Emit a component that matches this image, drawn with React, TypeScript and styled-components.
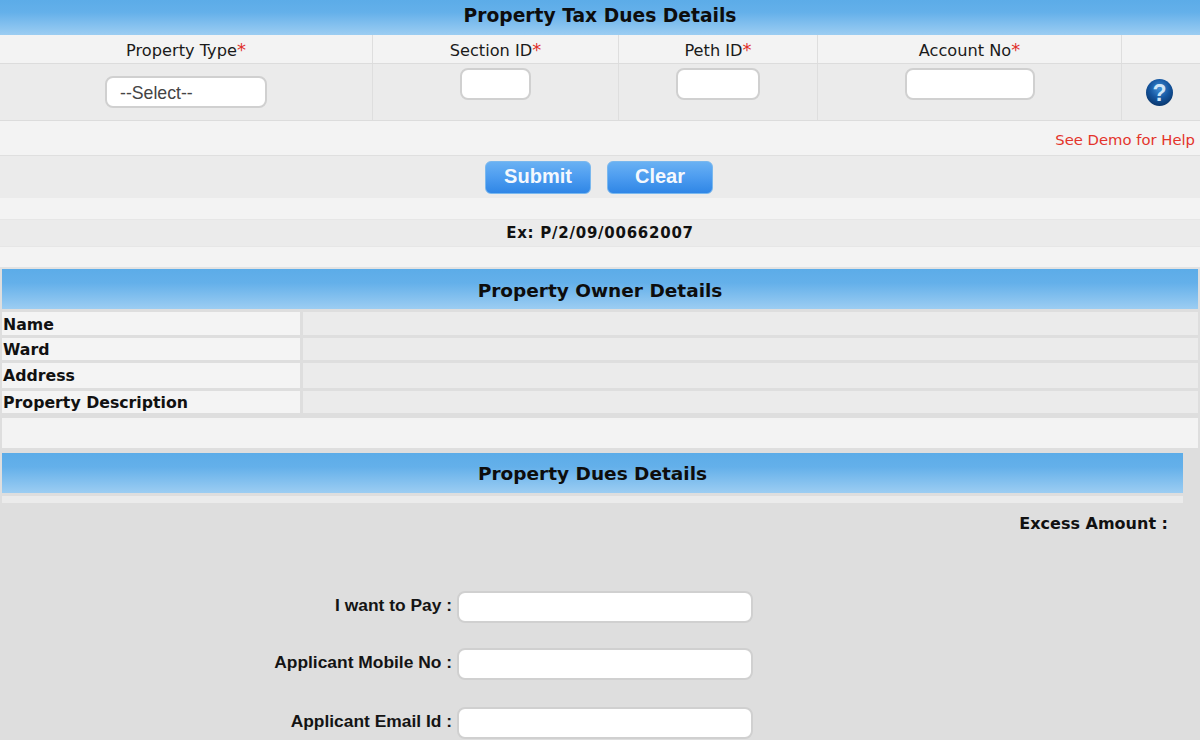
import React from "react";
import styled, { createGlobalStyle } from "styled-components";

const Global = createGlobalStyle`
  html, body { margin: 0; padding: 0; background: #dedede; }
  body { font-family: "DejaVu Sans", Verdana, sans-serif; color: #111; overflow: hidden; }
  #root { width: 1200px; height: 740px; overflow: hidden; }
`;

const Page = styled.div`
  width: 1200px;
  height: 740px;
  overflow: hidden;
  display: flex;
  flex-direction: column;
`;

const Banner = styled.h2<{ $h: number; $size?: number; $pb?: number; $pt?: number }>`
  margin: 0;
  box-sizing: border-box;
  height: ${(p) => p.$h}px;
  padding: ${(p) => p.$pt ?? 0}px 0 ${(p) => p.$pb ?? 0}px;
  flex: none;
  display: flex;
  align-items: center;
  justify-content: center;
  font-size: ${(p) => p.$size ?? 18.5}px;
  font-weight: 700;
  color: #0d0d0d;
  background: linear-gradient(#5cace8 0%, #64b0ea 35%, #9ccdf2 100%);
`;

const Cols = "373px 246px 199px 304px 78px";

const HeadRow = styled.div`
  display: grid;
  grid-template-columns: ${Cols};
  box-sizing: border-box;
  height: 29px;
  flex: none;
  background: #f3f3f3;
  border-bottom: 1px solid #dcdcdc;
`;

const HeadCell = styled.div`
  display: flex;
  align-items: center;
  justify-content: center;
  font-size: 16.2px;
  color: #1a1a1a;
  border-right: 1px solid #dedede;
  padding-top: 3px;
  &:last-child { border-right: 0; }
`;

const Star = styled.span`
  color: #e0302a;
  font-size: 18px;
  line-height: 1;
`;

const InputRow = styled.div`
  display: grid;
  grid-template-columns: ${Cols};
  box-sizing: border-box;
  height: 57px;
  flex: none;
  background: #ebebeb;
  border-bottom: 1px solid #dcdcdc;
`;

const InputCell = styled.div<{ $center?: boolean }>`
  display: flex;
  justify-content: center;
  align-items: ${(p) => (p.$center ? "center" : "flex-start")};
  padding-top: ${(p) => (p.$center ? 0 : 4)}px;
  border-right: 1px solid #dedede;
  &:last-child { border-right: 0; }
`;

const Field = styled.div<{ $w: number; $h?: number }>`
  box-sizing: border-box;
  width: ${(p) => p.$w}px;
  height: ${(p) => p.$h ?? 32}px;
  background: #fff;
  border: 2px solid #d0d0d0;
  border-radius: 8px;
  flex: none;
`;

const SelectBox = styled(Field)`
  display: flex;
  align-items: center;
  padding: 2px 0 0 13px;
  font-family: "Liberation Sans", Arial, sans-serif;
  font-size: 17.7px;
  color: #444;
`;

const HelpWrap = styled.div`
  display: flex;
  margin-right: 3px;
`;

const DemoRow = styled.div`
  height: 35px;
  flex: none;
  background: #f3f3f3;
  border-bottom: 1px solid #dfdfdf;
  display: flex;
  align-items: center;
  justify-content: flex-end;
  padding: 3px 5px 0 0;
  box-sizing: border-box;
  font-size: 14.8px;
  color: #e3342b;
`;

const ButtonRow = styled.div`
  height: 42px;
  flex: none;
  background: #ebebeb;
  display: flex;
  justify-content: center;
  align-items: flex-start;
  gap: 16px;
  padding: 5px 2px 0 0;
  box-sizing: border-box;
`;

const Btn = styled.button`
  width: 106px;
  height: 33px;
  padding: 0 0 2px;
  border: 1px solid #7ab8ee;
  border-radius: 6px;
  background: linear-gradient(#69b1f3 0%, #4f9ef0 45%, #2f86e6 100%);
  color: #f4f8fd;
  font-family: "Liberation Sans", Arial, sans-serif;
  font-size: 20px;
  font-weight: 700;
`;

const Blank = styled.div<{ $h: number; $bg?: string }>`
  height: ${(p) => p.$h}px;
  flex: none;
  background: ${(p) => p.$bg ?? "#f3f3f3"};
`;

const ExRow = styled.div`
  height: 28px;
  flex: none;
  background: #ebebeb;
  display: flex;
  align-items: center;
  justify-content: center;
  font-size: 15px;
  letter-spacing: 0.75px;
  font-weight: 700;
  color: #111;
  border-top: 1px solid #e6e6e6;
  border-bottom: 1px solid #e6e6e6;
  box-sizing: border-box;
`;

const Inset = styled.div<{ $right?: number }>`
  margin: 0 ${(p) => p.$right ?? 2}px 0 2px;
  display: flex;
  flex-direction: column;
  flex: none;
`;

const OwnerTable = styled.div`
  margin: 3px 2px 0;
  display: flex;
  flex-direction: column;
  flex: none;
`;

const OwnerRow = styled.div<{ $h: number; $gap: number }>`
  display: grid;
  grid-template-columns: 298px 1fr;
  column-gap: 3px;
  height: ${(p) => p.$h}px;
  margin-bottom: ${(p) => p.$gap}px;
`;

const OwnerLabel = styled.div<{ $pt: number }>`
  background: #f4f4f4;
  font-size: 15.75px;
  font-weight: 700;
  color: #111;
  display: flex;
  align-items: center;
  padding: ${(p) => p.$pt}px 0 0 1px;
`;

const OwnerValue = styled.div`
  background: #ebebeb;
`;

const ExcessRow = styled.div`
  display: flex;
  justify-content: flex-end;
  padding: 12px 32px 0 0;
  height: 66px;
  box-sizing: border-box;
  font-size: 16px;
  font-weight: 700;
  color: #111;
  line-height: 17px;
  flex: none;
`;

const FormRow = styled.div<{ $mb: number }>`
  display: grid;
  grid-template-columns: 452px 296px;
  column-gap: 5px;
  align-items: center;
  margin-bottom: ${(p) => p.$mb}px;
  flex: none;
`;

const FormLabel = styled.label`
  text-align: right;
  font-family: "Liberation Sans", Arial, sans-serif;
  font-size: 17.4px;
  font-weight: 700;
  color: #141414;
  margin-top: -3px;
`;

const HelpIcon = () => (
  <svg width="27" height="27" viewBox="0 0 27 27">
    <defs>
      <radialGradient id="hg" cx="50%" cy="35%" r="62%">
        <stop offset="0%" stopColor="#3f8fd8" />
        <stop offset="60%" stopColor="#14559f" />
        <stop offset="100%" stopColor="#0b3a72" />
      </radialGradient>
    </defs>
    <circle cx="13.5" cy="13.5" r="13.5" fill="url(#hg)" />
    <text
      x="13.5"
      y="21.5"
      textAnchor="middle"
      fontFamily="'Liberation Sans', Arial, sans-serif"
      fontWeight="700"
      fontSize="23"
      fill="#cfe6f7"
    >
      ?
    </text>
  </svg>
);

const Req = ({ children }: { children: React.ReactNode }) => (
  <HeadCell>
    <span>
      {children}
      <Star>*</Star>
    </span>
  </HeadCell>
);

const owners: [string, number, number, number][] = [
  ["Name", 23, 3, 1],
  ["Ward", 22, 3, 1],
  ["Address", 25, 3, 0],
  ["Property Description", 22, 5, 1],
];

export default function App() {
  return (
    <Page>
      <Global />
      <Banner $h={35} $size={18.7} $pb={5}>
        Property Tax Dues Details
      </Banner>
      <HeadRow>
        <Req>Property Type</Req>
        <Req>Section ID</Req>
        <Req>Peth ID</Req>
        <Req>Account No</Req>
        <HeadCell />
      </HeadRow>
      <InputRow>
        <InputCell $center>
          <SelectBox $w={162}>--Select--</SelectBox>
        </InputCell>
        <InputCell>
          <Field $w={71} />
        </InputCell>
        <InputCell>
          <Field $w={84} />
        </InputCell>
        <InputCell>
          <Field $w={130} />
        </InputCell>
        <InputCell $center>
          <HelpWrap>
            <HelpIcon />
          </HelpWrap>
        </InputCell>
      </InputRow>
      <DemoRow>See Demo for Help</DemoRow>
      <ButtonRow>
        <Btn>Submit</Btn>
        <Btn>Clear</Btn>
      </ButtonRow>
      <Blank $h={21} />
      <ExRow>Ex: P/2/09/00662007</ExRow>
      <Blank $h={20} />
      <Blank $h={2} $bg="#e2e2e2" />
      <Inset>
        <Banner $h={40} $pt={2}>
          Property Owner Details
        </Banner>
      </Inset>
      <OwnerTable>
        {owners.map(([label, h, gap, pt]) => (
          <OwnerRow key={label} $h={h} $gap={gap}>
            <OwnerLabel $pt={pt}>{label}</OwnerLabel>
            <OwnerValue />
          </OwnerRow>
        ))}
      </OwnerTable>
      <Inset>
        <Blank $h={30} />
      </Inset>
      <Blank $h={5} $bg="#dedede" />
      <Inset $right={17}>
        <Banner $h={40}>Property Dues Details</Banner>
        <Blank $h={3} $bg="#dedede" />
        <Blank $h={7} $bg="#ebebeb" />
      </Inset>
      <ExcessRow>Excess Amount :</ExcessRow>
      <Blank $h={22} $bg="#dedede" />
      <FormRow $mb={25}>
        <FormLabel>I want to Pay :</FormLabel>
        <Field $w={296} />
      </FormRow>
      <FormRow $mb={27}>
        <FormLabel>Applicant Mobile No :</FormLabel>
        <Field $w={296} />
      </FormRow>
      <FormRow $mb={0}>
        <FormLabel>Applicant Email Id :</FormLabel>
        <Field $w={296} />
      </FormRow>
    </Page>
  );
}
